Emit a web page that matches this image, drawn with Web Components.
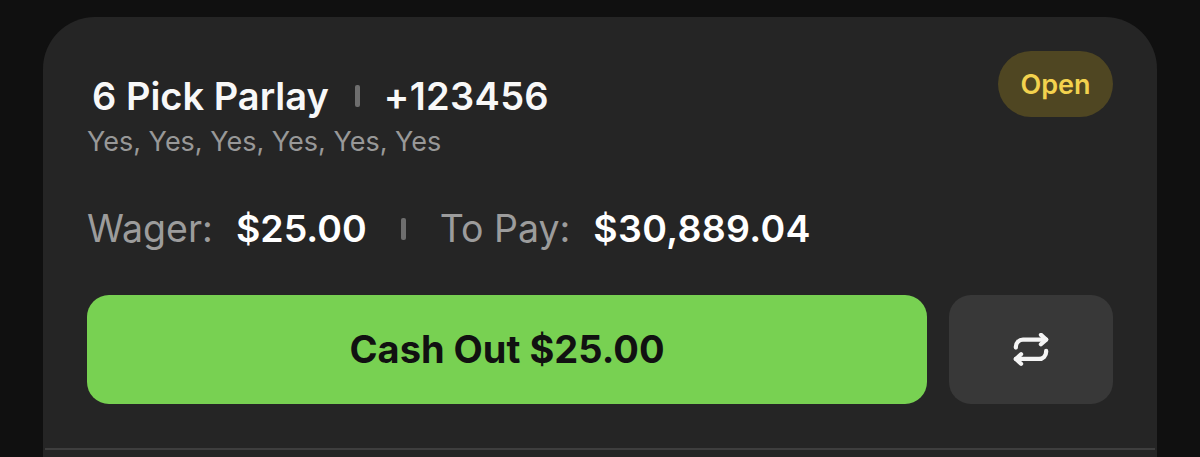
<!DOCTYPE html>
<html><head><meta charset="utf-8">
<style>
html,body{margin:0;padding:0;background:#101010;height:457px;overflow:hidden}
body{padding:17px 43px 0;box-sizing:border-box;font-family:Inter,"Liberation Sans",sans-serif}
.odds{margin-left:-2px;letter-spacing:.3px}
#pay{--value-spacing:.3px}
</style></head><body>
<bet-card>
  <span slot="title">6 Pick Parlay</span>
  <span slot="odds" class="odds">+123456</span>
  <span slot="legs">Yes, Yes, Yes, Yes, Yes, Yes</span>
  <status-pill slot="status">Open</status-pill>
  <bet-amount slot="wager" label="Wager:" value="$25.00"></bet-amount>
  <v-sep slot="sep"></v-sep>
  <bet-amount id="pay" slot="pay" label="To Pay:" value="$30,889.04"></bet-amount>
  <cash-button slot="cash">Cash Out $25.00</cash-button>
  <swap-button slot="swap"></swap-button>
</bet-card>
<script>
const def=(n,html,init)=>customElements.define(n,class extends HTMLElement{
  constructor(){super();this.attachShadow({mode:'open'}).innerHTML=html;}
  connectedCallback(){init&&init(this);}
});
def('v-sep',`<style>:host{display:block;width:5px;height:22px;border-radius:2px;background:#6e6e6e}</style>`);
def('status-pill',`<style>:host{display:flex;align-items:center;justify-content:center;width:115px;height:66px;border-radius:33px;background:#4f4622;color:#f3d24e;font-size:27px;font-weight:600;box-sizing:border-box}</style><slot></slot>`);
def('bet-amount',`<style>:host{display:flex;align-items:baseline;gap:23px;font-size:37.500px;line-height:44px}
#l{color:#9c9c9c;font-weight:400}#v{color:#fff;font-weight:600;letter-spacing:var(--value-spacing,0)}</style><span id="l"></span><span id="v"></span>`,
 e=>{e.shadowRoot.getElementById('l').textContent=e.getAttribute('label');e.shadowRoot.getElementById('v').textContent=e.getAttribute('value');});
def('cash-button',`<style>:host{display:flex;align-items:center;justify-content:center;height:109px;padding-bottom:1px;box-sizing:border-box;border-radius:22px;background:#78d152;color:#111;font-size:38px;font-weight:700}</style><slot></slot>`);
def('swap-button',`<style>:host{display:flex;align-items:center;justify-content:center;height:109px;border-radius:22px;background:#383838}svg{display:block}</style>
<svg width="36" height="33" viewBox="0 0 38 34" fill="none" stroke="#f4f4f4" stroke-width="4.500" stroke-linecap="round" stroke-linejoin="round">
<path d="M3 15v-1a7.500 7.500 0 0 1 7.500-7.500H35"/><path d="M29.500 1.500 35 6.500 29.500 11.500"/>
<path d="M35 18.500v1a7.500 7.500 0 0 1-7.500 7.500H3"/><path d="M8.500 22 3 27 8.500 32"/></svg>`);
def('bet-card',`<style>
:host{display:block;height:440px;box-sizing:border-box;background:#252525;border-radius:52px 52px 0 0;position:relative;padding:34px 44px 0}
.top{display:flex;justify-content:space-between;align-items:flex-start}
.head{display:flex;align-items:center;padding:23px 0 0 5px;font-size:38px;font-weight:600;color:#f8f8f8;line-height:44px;gap:26px}
.legs{margin-top:8px;font-size:27px;line-height:32px;color:#989898}
.amounts{display:flex;align-items:center;margin-top:49px;gap:34px}
.actions{display:grid;grid-template-columns:840px 164px;gap:22px;margin-top:44px}
.rule{position:absolute;left:2px;right:2px;top:431px;height:2px;background:#3e3e3e}
</style>
<div class="top"><div><div class="head"><slot name="title"></slot><v-sep></v-sep><slot name="odds"></slot></div><div class="legs"><slot name="legs"></slot></div></div><slot name="status"></slot></div>
<div class="amounts"><slot name="wager"></slot><slot name="sep"></slot><slot name="pay"></slot></div>
<div class="actions"><slot name="cash"></slot><slot name="swap"></slot></div>
<div class="rule"></div>`);
</script>
</body></html>
